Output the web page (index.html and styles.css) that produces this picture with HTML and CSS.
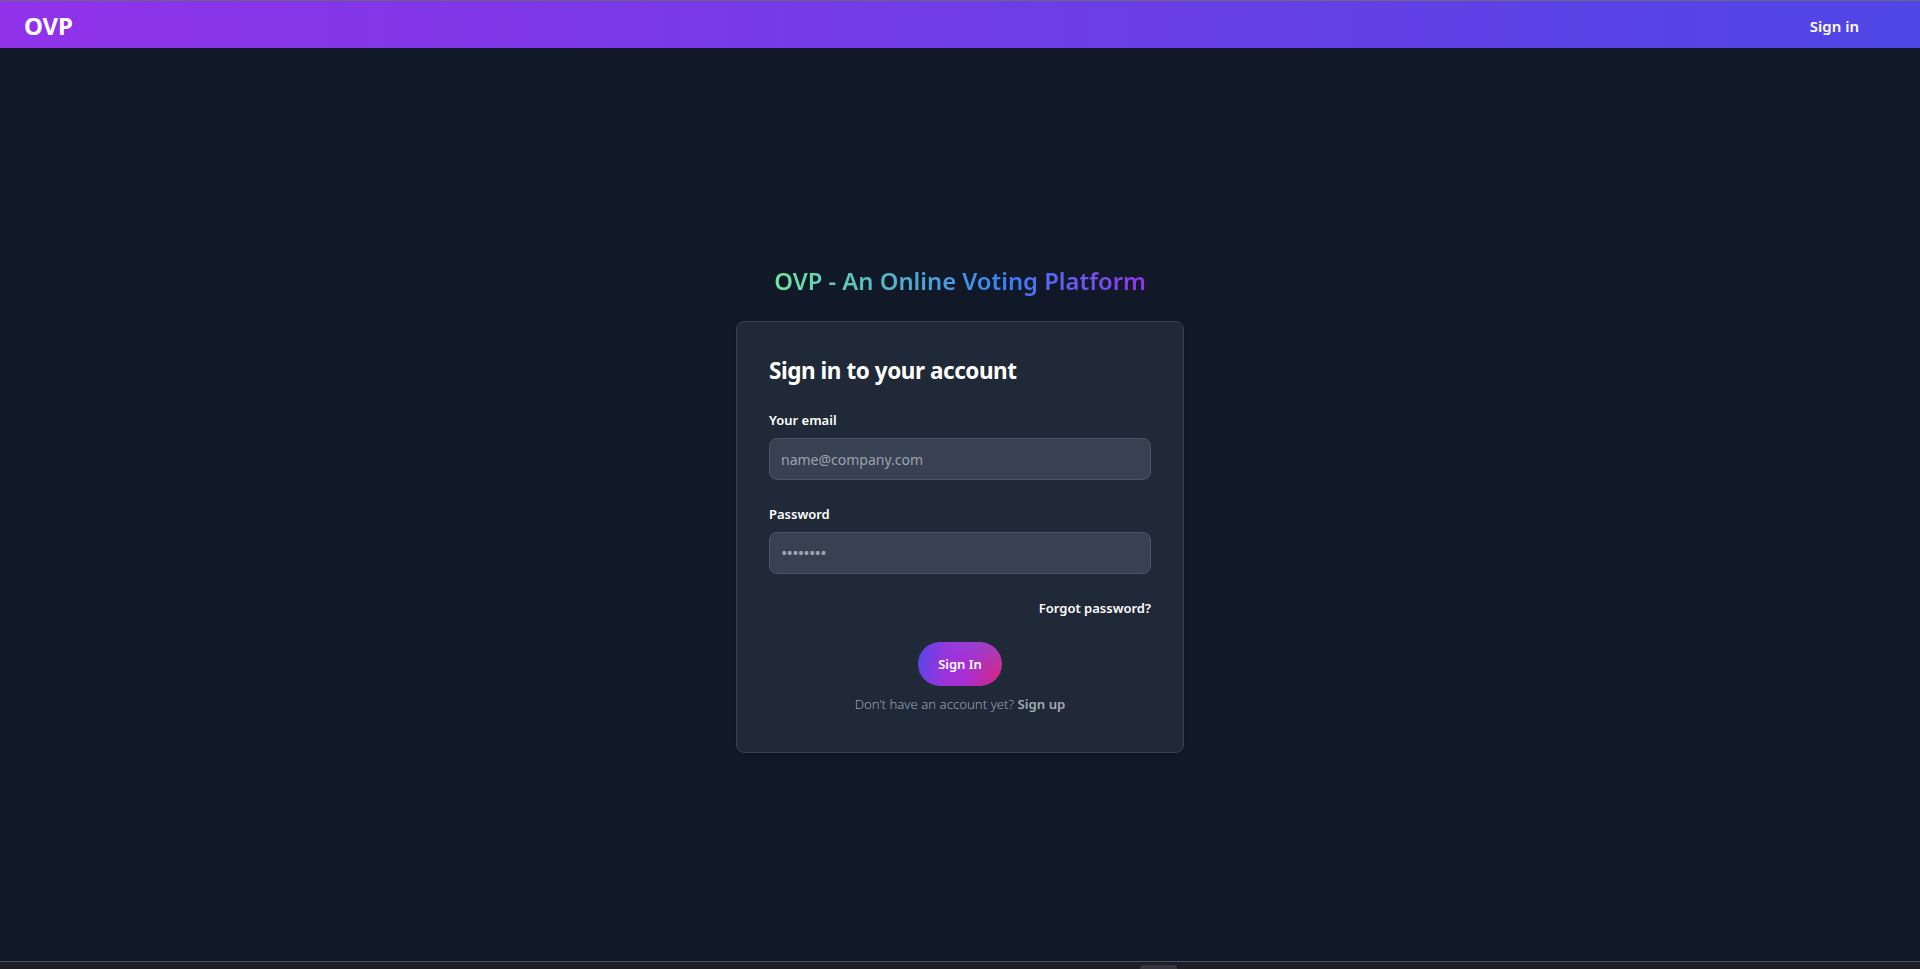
FILE: index.html
```html
<!DOCTYPE html>
<html lang="en">
<head>
<meta charset="utf-8">
<title>OVP - Sign in</title>
<link rel="stylesheet" href="styles.css">
</head>
<body>
<header class="navbar">
  <a class="logo" href="#">OVP</a>
  <a class="nav-link" href="#">Sign in</a>
</header>
<main class="page">
  <h2 class="brand-title">OVP - An Online Voting Platform</h2>
  <div class="card">
    <h1 class="card-title">Sign in to your account</h1>
    <form class="form">
      <div class="field">
        <label class="label" for="email">Your email</label>
        <input class="input" type="email" id="email" placeholder="name@company.com">
      </div>
      <div class="field">
        <label class="label" for="password">Password</label>
        <input class="input input-password" type="password" id="password" placeholder="••••••••">
      </div>
      <div class="forgot-row">
        <a class="forgot" href="#">Forgot password?</a>
      </div>
      <div class="actions">
        <button class="btn" type="button">Sign In</button>
        <p class="signup">Don’t have an account yet? <a class="signup-link" href="#">Sign up</a></p>
      </div>
    </form>
  </div>
</main>
<div class="os-strip"><span class="os-thumb"></span></div>
</body>
</html>
```
FILE: styles.css
```css
html, body {
  margin: 0;
  padding: 0;
}
body {
  height: 100vh;
  display: flex;
  flex-direction: column;
  background: #111827;
  font-family: "Noto Sans", "Open Sans", Arial, sans-serif;
  color: #fff;
  overflow: hidden;
}
a {
  text-decoration: none;
  color: inherit;
}
.navbar {
  height: 47px;
  flex: 0 0 auto;
  border-top: 1px solid #6b6680;
  display: flex;
  align-items: center;
  justify-content: space-between;
  padding: 0 61px 0 24px;
  background: linear-gradient(to right, #9132ea, #4f46e5);
}
.logo {
  font-size: 24px;
  font-weight: 700;
  letter-spacing: -0.2px;
  color: #fff;
  line-height: 30px;
  margin-top: 2px;
}
.nav-link {
  font-size: 15px;
  font-weight: 600;
  color: #fff;
  line-height: 24px;
  margin-top: 2px;
}
.page {
  flex: 1 1 auto;
  display: flex;
  flex-direction: column;
  align-items: center;
  padding-top: 217px;
}
.brand-title {
  margin: 0 0 24px;
  font-size: 23.8px;
  line-height: 32px;
  font-weight: 600;
  background: linear-gradient(to right, #6ee7a0, #3b82f6 62%, #9333ea);
  -webkit-background-clip: text;
  background-clip: text;
  color: transparent;
}
.card {
  width: 448px;
  box-sizing: border-box;
  background: #1f2937;
  border: 1px solid #374151;
  border-radius: 8px;
  padding: 33px 32px 38px;
  box-shadow: 0 1px 3px rgba(0,0,0,0.1);
}
.card-title {
  margin: 0 0 23px;
  font-size: 22.5px;
  line-height: 32px;
  font-weight: 700;
  letter-spacing: -0.45px;
  color: #fff;
}
.form {
  display: flex;
  flex-direction: column;
  gap: 24px;
  margin: 0;
}
.label {
  display: block;
  margin-bottom: 8px;
  font-size: 13px;
  line-height: 20px;
  font-weight: 600;
  color: #fff;
}
.input {
  display: block;
  width: 100%;
  box-sizing: border-box;
  height: 42px;
  padding: 10px 11px;
  background: #374151;
  border: 1px solid #4b5563;
  border-radius: 8px;
  color: #fff;
  font-family: inherit;
  font-size: 14px;
  line-height: 20px;
  outline: none;
}
.input::placeholder {
  color: #9ca3af;
  opacity: 1;
}
.input-password::placeholder {
  letter-spacing: -0.8px;
  font-size: 17px;
}
.forgot-row {
  display: flex;
  justify-content: flex-end;
}
.forgot {
  font-size: 13px;
  line-height: 20px;
  font-weight: 600;
  color: #fff;
}
.actions {
  display: flex;
  flex-direction: column;
  align-items: center;
  gap: 8px;
}
.btn {
  border: 0;
  border-radius: 9999px;
  padding: 12px 20px;
  font-family: inherit;
  font-size: 13px;
  line-height: 20px;
  font-weight: 600;
  color: #fff;
  cursor: pointer;
  background:
    linear-gradient(200deg, rgba(126, 87, 220, 0.55) 0%, rgba(126, 87, 220, 0) 45%),
    linear-gradient(100deg, #5247e6 0%, #9d33dc 35%, #a82fcf 60%, #d6287e 100%);
}
.signup {
  margin: 0;
  font-size: 13.2px;
  line-height: 20px;
  font-weight: 300;
  color: #9ca3af;
}
.signup-link {
  font-weight: 600;
  color: #a5acb8;
}
.os-strip {
  flex: 0 0 auto;
  height: 7px;
  border-top: 1px solid #4a5563;
  background: #1e1f25;
  position: relative;
}
.os-thumb {
  position: absolute;
  left: 1140px;
  top: 3px;
  width: 37px;
  height: 4px;
  border-radius: 3px 3px 0 0;
  background: #35363f;
}
```
